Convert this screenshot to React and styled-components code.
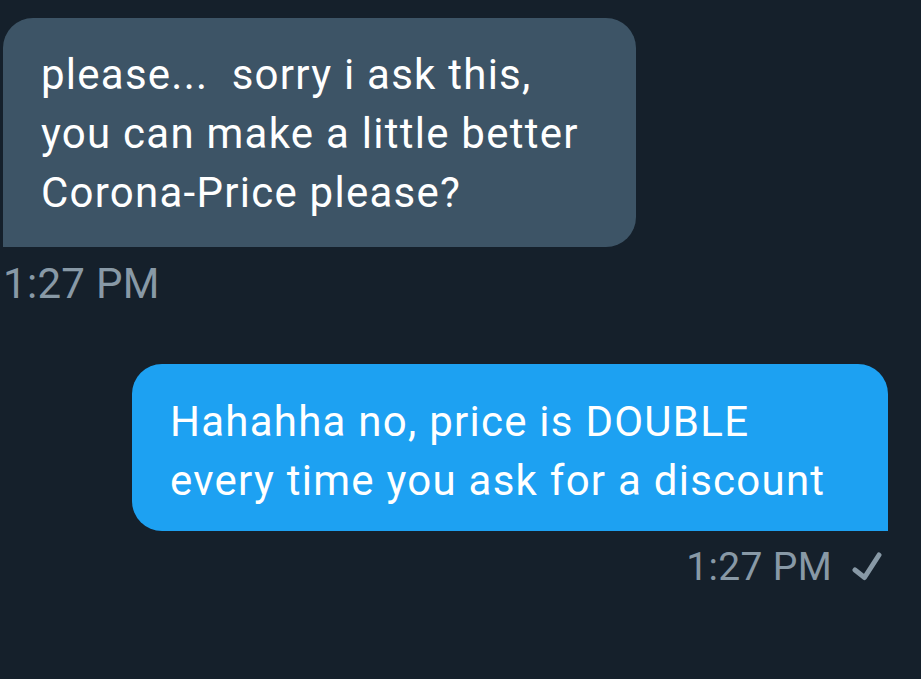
import styled, { createGlobalStyle } from "styled-components";

const GlobalStyle = createGlobalStyle`
  html, body {
    margin: 0;
    padding: 0;
    background: #15202b;
  }
  body {
    font-family: Roboto, "Noto Sans", "Liberation Sans", sans-serif;
    -webkit-font-smoothing: antialiased;
  }
`;

const Thread = styled.div`
  width: 921px;
  height: 679px;
  box-sizing: border-box;
  padding: 18px 33px 0 3px;
  display: flex;
  flex-direction: column;
  background: #15202b;
  overflow: hidden;
`;

const Message = styled.div`
  display: flex;
  flex-direction: column;
  align-items: ${({ mine }) => (mine ? "flex-end" : "flex-start")};
  margin-top: ${({ mine }) => (mine ? "55px" : "0")};
`;

const Bubble = styled.div`
  box-sizing: border-box;
  width: ${({ width }) => width}px;
  padding: ${({ mine }) => (mine ? "28px 20px 21px 38px" : "27px 20px 25px 38px")};
  background: ${({ mine }) => (mine ? "#1da1f2" : "#3d5466")};
  color: #ffffff;
  font-size: 42px;
  line-height: 59px;
  letter-spacing: 1.25px;
  border-radius: ${({ mine }) => (mine ? "30px 30px 0 30px" : "30px 30px 30px 0")};
  white-space: nowrap;
`;

const Meta = styled.div`
  display: flex;
  align-items: center;
  gap: 20px;
  margin-top: ${({ mine }) => (mine ? "13px" : "12px")};
  margin-right: ${({ mine }) => (mine ? "6px" : "0")};
  color: #8899a6;
  font-size: ${({ mine }) => (mine ? "39px" : "42px")};
  line-height: ${({ mine }) => (mine ? "46px" : "50px")};
  letter-spacing: 0.3px;
`;

const Check = () => (
  <svg width="30" height="30" viewBox="0 0 30 30" fill="none">
    <path
      d="M3 18 L12.5 25.5 L27 3"
      stroke="#8899a6"
      strokeWidth="5"
      strokeLinecap="round"
      strokeLinejoin="round"
    />
  </svg>
);

const App = () => (
  <>
    <GlobalStyle />
    <Thread>
      <Message>
        <Bubble width={633}>
          please...&nbsp; sorry i ask this,
          <br />
          you can make a little better
          <br />
          Corona-Price please?
        </Bubble>
        <Meta>1:27 PM</Meta>
      </Message>
      <Message mine>
        <Bubble mine width={756}>
          Hahahha no, price is DOUBLE
          <br />
          every time you ask for a discount
        </Bubble>
        <Meta mine>
          1:27 PM
          <Check />
        </Meta>
      </Message>
    </Thread>
  </>
);

export default App;
